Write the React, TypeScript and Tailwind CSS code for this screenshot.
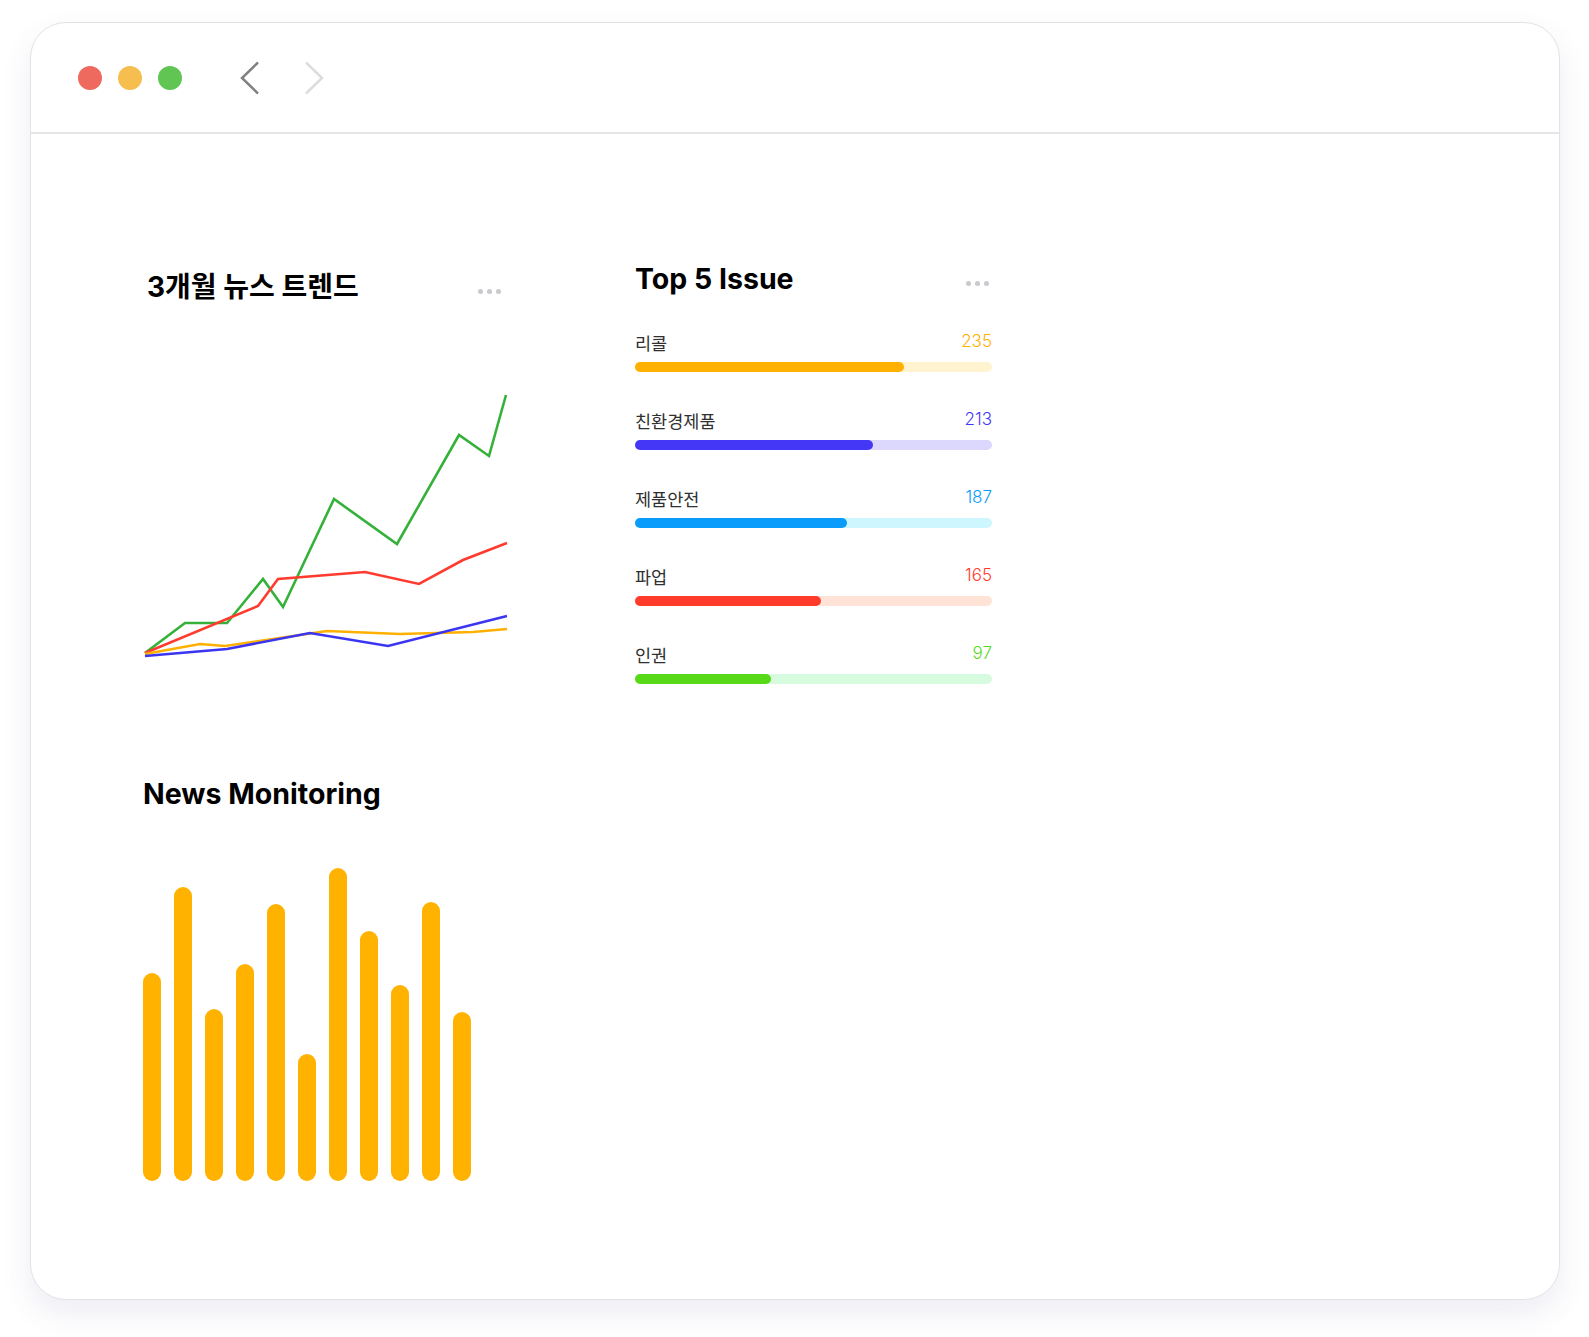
import React from "react";

const issues = [
  { label: "리콜", value: 235, pct: 75.4, fill: "bg-[#FFB000]", track: "bg-[#FFF4CF]", text: "text-[#FFB000]" },
  { label: "친환경제품", value: 213, pct: 66.6, fill: "bg-[#4537F6]", track: "bg-[#DCD8FD]", text: "text-[#4537F6]" },
  { label: "제품안전", value: 187, pct: 59.4, fill: "bg-[#0A9CFB]", track: "bg-[#CDF6FE]", text: "text-[#0A9CFB]" },
  { label: "파업", value: 165, pct: 52, fill: "bg-[#FF3B2C]", track: "bg-[#FFE3D6]", text: "text-[#FF3B2C]" },
  { label: "인권", value: 97, pct: 38, fill: "bg-[#57D917]", track: "bg-[#D6FBDE]", text: "text-[#57D917]" },
];

const bars = [208, 294, 172, 217, 277, 127, 313, 250, 196, 279, 169];

const font = { fontFamily: 'Inter, "Noto Sans CJK KR", "Noto Sans", sans-serif' };

function Dots() {
  return (
    <div className="flex items-center gap-[4px] mt-[8px]">
      <span className="w-[5px] h-[5px] rounded-full bg-[#C9C9CE]" />
      <span className="w-[5px] h-[5px] rounded-full bg-[#C9C9CE]" />
      <span className="w-[5px] h-[5px] rounded-full bg-[#C9C9CE]" />
    </div>
  );
}

function LineChart() {
  const green = "2,283 42,253 84,253 120,209 140,237 191,129 254,174 316,65 346,86 363,25";
  const red = "2,283 115,236 135,209 222,202 276,214 320,190 364,173";
  const orange = "2,284 57,274 82,276 184,261 257,264 330,262 364,259";
  const blue = "2,286 84,279 167,263 245,276 364,246";
  return (
    <svg width="370" height="300" viewBox="0 0 370 300" className="block">
      <polyline points={green} fill="none" stroke="#35B13A" strokeWidth="2.6" strokeLinejoin="miter" />
      <polyline points={red} fill="none" stroke="#FF3B30" strokeWidth="2.6" strokeLinejoin="miter" />
      <polyline points={orange} fill="none" stroke="#FFB000" strokeWidth="2.6" strokeLinejoin="miter" />
      <polyline points={blue} fill="none" stroke="#3B35F2" strokeWidth="2.6" strokeLinejoin="miter" />
    </svg>
  );
}

export default function App() {
  return (
    <div className="w-[1589px] h-[1337px] bg-white pt-[22px] pl-[30px]" style={font}>
      <div className="w-[1530px] h-[1278px] rounded-[36px] border border-[#E3E3E7] bg-white shadow-[0_14px_30px_rgba(80,80,150,0.10)] overflow-hidden">
        <div className="h-[111px] border-b-2 border-[#E6E6E9] flex items-center pl-[47px]">
          <div className="flex items-center gap-4 mt-[1px]">
            <span className="w-6 h-6 rounded-full bg-[#EE6A5F]" />
            <span className="w-6 h-6 rounded-full bg-[#F5BE4F]" />
            <span className="w-6 h-6 rounded-full bg-[#61C554]" />
          </div>
          <svg width="20" height="34" viewBox="0 0 20 34" className="ml-[58px] mt-[1px]">
            <polyline points="18,1.5 2,17 18,32.5" fill="none" stroke="#808080" strokeWidth="2.5" />
          </svg>
          <svg width="20" height="34" viewBox="0 0 20 34" className="ml-[44px] mt-[1px]">
            <polyline points="2,1.5 18,17 2,32.5" fill="none" stroke="#DCDCDC" strokeWidth="2.5" />
          </svg>
        </div>

        <div className="pl-[112px]">
          <div className="flex items-start gap-[134px]">
            <div className="w-[358px] pt-[135px]">
              <div className="flex items-center justify-between">
                <h2 className="text-[28px] leading-[36px] font-bold text-black pl-[4px]">3개월 뉴스 트렌드</h2>
                <Dots />
              </div>
              <div className="mt-[65px]">
                <LineChart />
              </div>
            </div>

            <div className="w-[357px] pt-[127px]">
              <div className="flex items-center justify-between pr-[3px]">
                <h2 className="text-[28.5px] leading-[36px] font-bold text-black">Top 5 Issue</h2>
                <Dots />
              </div>
              <div className="mt-[35px] flex flex-col gap-[38px]">
                {issues.map((it) => (
                  <div key={it.label}>
                    <div className="flex items-baseline justify-between h-[24px]">
                      <span className="text-[17.5px] leading-[24px] text-[#303030]">{it.label}</span>
                      <span className={`text-[17px] leading-[24px] font-light -translate-y-[3px] ${it.text}`}>{it.value}</span>
                    </div>
                    <div className={`mt-[6px] h-[10px] rounded-full ${it.track}`}>
                      <div className={`h-[10px] rounded-full ${it.fill}`} style={{ width: `${it.pct}%` }} />
                    </div>
                  </div>
                ))}
              </div>
            </div>
          </div>

          <div className="mt-[92px]">
            <h2 className="text-[28.5px] leading-[36px] font-bold text-black">News Monitoring</h2>
            <div className="mt-[56px] h-[313px] flex items-end gap-[13px]">
              {bars.map((h, i) => (
                <div key={i} className="w-[18px] rounded-full bg-[#FFB300]" style={{ height: `${h}px` }} />
              ))}
            </div>
          </div>
        </div>
      </div>
    </div>
  );
}
